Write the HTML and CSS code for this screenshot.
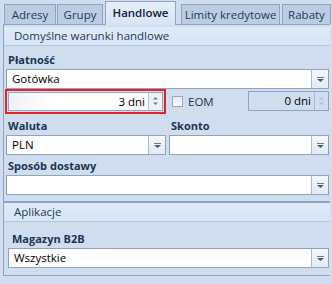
FILE: index.html
```html
<!DOCTYPE html>
<html lang="pl">
<head>
<meta charset="utf-8">
<link rel="stylesheet" href="styles.css">
</head>
<body>
<div class="tabs">
  <div class="tab t-adresy">Adresy</div>
  <div class="tab t-grupy">Grupy</div>
  <div class="tab active t-handlowe">Handlowe</div>
  <div class="tab t-limity">Limity kredytowe</div>
  <div class="tab t-rabaty">Rabaty</div>
</div>
<div class="panel">
  <div class="section-head">Domyślne warunki handlowe</div>
  <div class="section-body">
    <div class="label">Płatność</div>
    <div class="combo full"><span class="value">Gotówka</span><span class="drop"><svg width="7" height="5" viewBox="0 0 7 5"><rect x="0" y="0" width="7" height="1" fill="#6a7890"/><path d="M0 2h7l-3.5 3z" fill="#4a5870"/></svg></span></div>
    <div class="spin-row">
      <div class="focus-ring">
        <div class="spin"><span class="value right">3 dni</span><span class="arrows"><svg width="5" height="10" viewBox="0 0 5 10"><path d="M0 3.5h5L2.5 1z" fill="#6d7a8d"/><path d="M0 6.5h5L2.5 9z" fill="#6d7a8d"/></svg></span></div>
      </div>
      <div class="check"><span class="box"></span><span>EOM</span></div>
      <div class="spin disabled"><span class="value right">0 dni</span><span class="arrows"><svg width="5" height="10" viewBox="0 0 5 10"><path d="M0 3.5h5L2.5 1z" fill="#b3bfcf"/><path d="M0 6.5h5L2.5 9z" fill="#b3bfcf"/></svg></span></div>
    </div>
    <div class="two-col">
      <div class="col">
        <div class="label">Waluta</div>
        <div class="combo"><span class="value">PLN</span><span class="drop"><svg width="7" height="5" viewBox="0 0 7 5"><rect x="0" y="0" width="7" height="1" fill="#6a7890"/><path d="M0 2h7l-3.5 3z" fill="#4a5870"/></svg></span></div>
      </div>
      <div class="col">
        <div class="label">Skonto</div>
        <div class="combo"><span class="value"></span><span class="drop"><svg width="7" height="5" viewBox="0 0 7 5"><rect x="0" y="0" width="7" height="1" fill="#6a7890"/><path d="M0 2h7l-3.5 3z" fill="#4a5870"/></svg></span></div>
      </div>
    </div>
    <div class="label">Sposób dostawy</div>
    <div class="combo full"><span class="value"></span><span class="drop"><svg width="7" height="5" viewBox="0 0 7 5"><rect x="0" y="0" width="7" height="1" fill="#6a7890"/><path d="M0 2h7l-3.5 3z" fill="#4a5870"/></svg></span></div>
  </div>
  <div class="group2">
    <div class="section-head">Aplikacje</div>
    <div class="section-body inner">
      <div class="label">Magazyn B2B</div>
      <div class="combo full"><span class="value">Wszystkie</span><span class="drop"><svg width="7" height="5" viewBox="0 0 7 5"><rect x="0" y="0" width="7" height="1" fill="#6a7890"/><path d="M0 2h7l-3.5 3z" fill="#4a5870"/></svg></span></div>
    </div>
  </div>
</div>
</body>
</html>
```
FILE: styles.css
```css
* { box-sizing: border-box; }
html, body { margin: 0; padding: 0; }
body {
  width: 332px;
  height: 284px;
  overflow: hidden;
  background: #d0ddee;
  font-family: "Open Sans", "Noto Sans", sans-serif;
  font-size: 11px;
  color: #000;
}
.tabs {
  display: flex;
  align-items: flex-end;
  height: 24px;
  padding-left: 4px;
  position: relative;
  z-index: 1;
}
.tab {
  flex: none;
  height: 20px;
  border: 1px solid #8ea4c2;
  border-bottom: none;
  background: #bccde3;
  color: #1e3a5f;
  line-height: 19px;
  text-align: center;
  white-space: nowrap;
  font-size: 11.5px;
}
.t-adresy { width: 52px; margin-right: 1px; }
.t-grupy { width: 46px; margin-right: 2px; }
.t-handlowe { width: 71px; margin-right: 5px; }
.t-limity { width: 99px; margin-right: 2px; }
.t-rabaty { width: 49px; }
.tab.active {
  height: 24px;
  margin-bottom: -1px;
  background: linear-gradient(#e6effa, #d7e4f4);
  font-weight: 600;
  color: #0f2240;
  line-height: 22px;
}
.panel {
  margin-left: 3px;
  margin-right: 2px;
  height: 252px;
  border: 1px solid #8ea4c2;
  border-right: none;
  background: #d0ddee;
}
.section-head {
  margin-top: 2px;
  height: 19px;
  background: linear-gradient(#dfeaf8, #d6e4f6);
  border-bottom: 1px solid #b5c7df;
  color: #1e3a5f;
  padding-left: 10px;
  line-height: 18px;
  font-size: 11.5px;
}
.section-body {
  padding: 3px 1px 0 2px;
}
.label {
  font-weight: 700;
  color: #1a3456;
  height: 19px;
  line-height: 19px;
  padding-left: 2px;
  margin-top: 1px;
}
.combo, .spin {
  display: flex;
  height: 20px;
  border: 1px solid #8ea4c2;
  background: #fff;
}
.combo .value, .spin .value {
  flex: 1;
  padding: 0 5px;
  line-height: 18px;
  white-space: nowrap;
  overflow: hidden;
  font-size: 11.5px;
}
.value.right { text-align: right; padding-right: 3px; }
.drop {
  width: 17px;
  border-left: 1px solid #a9b9cf;
  background: linear-gradient(#f4f7fb, #e4eaf3);
  display: flex;
  align-items: center;
  justify-content: center;
}
.spin-row {
  display: flex;
  align-items: center;
  margin-top: -1px;
  height: 26px;
}
.focus-ring {
  width: 161px;
  height: 25px;
  border: 2px solid #e0242a;
  padding: 1px;
  margin-left: -1px;
}
.focus-ring .spin {
  height: 19px;
  background: linear-gradient(90deg, #eef1f5, #fff 30%);
}
.arrows {
  width: 14px;
  border-left: 1px solid #b7c4d6;
  background: #eef2f7;
  display: flex;
  align-items: center;
  justify-content: center;
}
.check {
  display: flex;
  align-items: center;
  gap: 5px;
  margin-left: 6px;
  color: #1a3456;
  font-size: 11.5px;
}
.check .box {
  width: 11px;
  height: 11px;
  border: 1px solid #9aa9bd;
  background: linear-gradient(#e6ebf1, #f7f9fb);
}
.spin.disabled {
  margin-left: auto;
  width: 81px;
  background: #d0ddee;
  color: #000;
}
.spin.disabled .arrows {
  background: #d0ddee;
  border-left-color: #a9b9cf;
}
.two-col {
  display: flex;
  gap: 3px;
  margin-top: 1px;
}
.two-col .col { flex: 1; }
.group2 {
  margin-top: 6px;
  border-top: 2px solid #8ea4c2;
}
.group2 .section-head { margin-top: 0; }
.section-body.inner {
  padding: 3px 1px 0 4px;
}
.section-body.inner .label { padding-left: 4px; margin-top: 4px; }
```
